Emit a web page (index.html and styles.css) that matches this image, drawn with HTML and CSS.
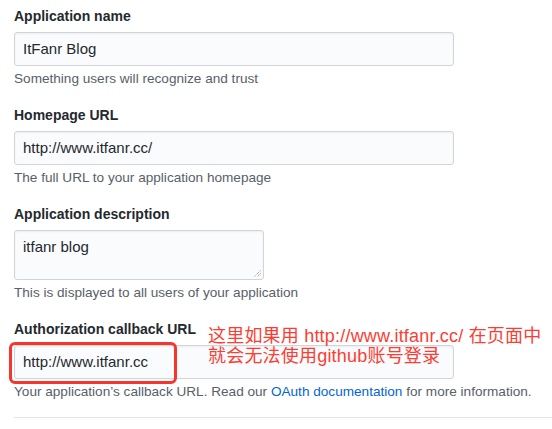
FILE: index.html
```html
<!DOCTYPE html>
<html lang="en">
<head>
<meta charset="utf-8">
<title>Register OAuth application</title>
<link rel="stylesheet" href="styles.css">
</head>
<body>
<form class="form">
  <div class="group">
    <label class="label">Application name</label>
    <div class="input">ItFanr Blog</div>
    <p class="note">Something users will recognize and trust</p>
  </div>
  <div class="group">
    <label class="label">Homepage URL</label>
    <div class="input">http://www.itfanr.cc/</div>
    <p class="note">The full URL to your application homepage</p>
  </div>
  <div class="group">
    <label class="label">Application description</label>
    <div class="textarea">itfanr blog<svg class="grip" width="7" height="7" viewBox="0 0 7 7"><path d="M6.5 0.5 L0.5 6.5 M6.5 3.5 L3.5 6.5" stroke="#777" stroke-width="1" stroke-dasharray="1 1"/></svg></div>
    <p class="note">This is displayed to all users of your application</p>
  </div>
  <div class="group last">
    <label class="label">Authorization callback URL</label>
    <div class="input">http://www.itfanr.cc</div>
    <p class="note">Your application’s callback URL. Read our <a class="link">OAuth documentation</a> for more information.</p>
  </div>
  <div class="divider"></div>
</form>
<div class="mark"></div>
<div class="annotation">这里如果用 http://www.itfanr.cc/ 在页面中<br>就会无法使用github账号登录</div>
</body>
</html>
```
FILE: styles.css
```css
html, body {
  margin: 0;
  padding: 0;
  background: #ffffff;
  overflow: hidden;
}
body {
  font-family: "Liberation Sans", Arial, sans-serif;
  color: #24292e;
  position: relative;
  width: 552px;
  height: 429px;
}
.form {
  padding: 6px 0 0 14px;
  margin: 0;
}
.group {
  display: flex;
  flex-direction: column;
  align-items: flex-start;
  margin-bottom: 17px;
}
.group.last {
  margin-bottom: 0;
}
.label {
  font-size: 14px;
  font-weight: 700;
  line-height: 20px;
  margin-bottom: 6px;
  color: #24292e;
}
.input {
  box-sizing: border-box;
  width: 440px;
  height: 34px;
  border: 1px solid #d1d5da;
  border-radius: 3px;
  background: #fafbfc;
  padding: 0 8px;
  font-size: 15px;
  line-height: 32px;
  color: #24292e;
  box-shadow: inset 0 1px 2px rgba(27, 31, 35, 0.06);
}
.textarea {
  box-sizing: border-box;
  position: relative;
  width: 250px;
  height: 50px;
  border: 1px solid #d1d5da;
  border-radius: 3px;
  background: #fafbfc;
  padding: 6px 8px 0;
  font-size: 15px;
  line-height: 20px;
  color: #24292e;
  box-shadow: inset 0 1px 2px rgba(27, 31, 35, 0.06);
}
.grip {
  position: absolute;
  right: 2px;
  bottom: 2px;
}
.note {
  margin: 4px 0 0;
  font-size: 13.6px;
  line-height: 18px;
  color: #586069;
  white-space: nowrap;
}
.link {
  color: #0366d6;
  text-decoration: none;
}
.divider {
  margin-top: 16px;
  height: 1px;
  background: #e1e4e8;
}
.mark {
  position: absolute;
  left: 9px;
  top: 342px;
  width: 168px;
  height: 42px;
  box-sizing: border-box;
  border: 3px solid #f7352c;
  border-radius: 6px;
}
.annotation {
  position: absolute;
  left: 208px;
  top: 326px;
  font-family: "Liberation Sans", "Noto Sans CJK SC", sans-serif;
  font-size: 18px;
  line-height: 20px;
  letter-spacing: 0.2px;
  color: #fc3d33;
  white-space: nowrap;
}
```
